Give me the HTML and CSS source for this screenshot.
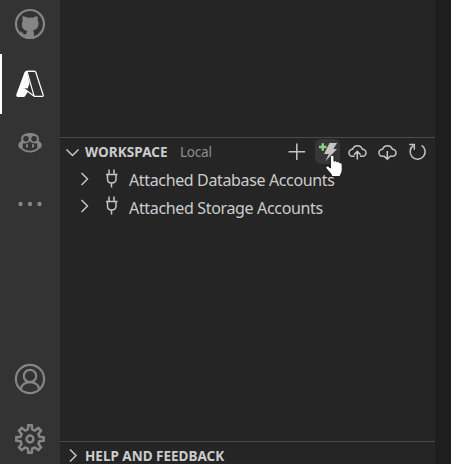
FILE: index.html
```html
<!DOCTYPE html>
<html lang="en">
<head>
<meta charset="utf-8">
<title>Workspace</title>
<link rel="stylesheet" href="styles.css">
</head>
<body>
<div class="workbench">
  <nav class="activity-bar">
    <div class="activity">
      <svg width="60" height="60" viewBox="0 0 60 60">
        <circle cx="30" cy="30" r="14" fill="none" stroke="currentColor" stroke-width="2.2"/>
        <path fill="currentColor" d="M22.6 22.3c.6-.6 3.4.5 5 1.5q2.6-.5 5 0c1.7-1.1 4.2-2 4.7-1.5.7 1.5.6 3 .3 4 1 1.4 1.2 3 .8 5.3-.5 2.8-2.7 4.2-5.500 4.700.8 1 1 2 1 3.600v5H26.300v-2.900c-3 .4-4-.8-4.700-2.200-.5-1-1.400-1.600-1.900-2 .8-.7 2.300 0 3 1.100.9 1.400 2 1.500 3.600 1 .1-1.500.4-2.300 1.200-3-2.800-.5-5-1.900-5.500-4.700-.4-2.500-.1-4 .8-5.500-.5-1.400-.6-3-.2-4.400Z"/>
      </svg>
    </div>
    <div class="activity active">
      <svg width="60" height="60" viewBox="0 0 60 60">
        <path fill="currentColor" d="M26.500 16.700H35.500L27 17.800 29.500 29.500 27.600 34.500 23 34 28 37.500 25 42.200Q24.500 43 23.500 43H17.500Q15.700 42.500 16.300 40.500L24.500 18.200Q25.200 16.700 26.500 16.700Z"/>
        <path fill="none" stroke="currentColor" stroke-width="1.200" stroke-linejoin="round" d="M27 17.300H34.500Q35.500 17.300 35.800 18.300L43.200 41Q43.600 42.300 42.400 42.300H34.200L23.500 34.300M27 17.300L34.200 42.300"/>
      </svg>
    </div>
    <div class="activity">
      <svg width="60" height="60" viewBox="0 0 60 60">
        <path fill="currentColor" d="M30 19c4.500 0 8 1.500 8.700 4.500.3 1.200.2 2.400 0 3.500 1.700.9 3.100 2.100 3.100 4.200 0 1.600-1 2.800-2.500 3.600C37 37.200 33.800 38.500 30 38.500s-7-1.300-9.300-3.700c-1.500-.8-2.500-2-2.500-3.600 0-2.100 1.400-3.300 3.100-4.200-.2-1.100-.3-2.300 0-3.500C22 20.500 25.500 19 30 19Z"/>
        <g fill="#333">
          <circle cx="26" cy="24.700" r="2.800"/><circle cx="34.100" cy="24.700" r="2.800"/>
          <path d="M22.700 29.300c2.700.7 5.500-.1 7.300-2 1.800 1.900 4.600 2.700 7.300 2v5c-4.200 3.200-10.400 3.200-14.600 0Z"/>
        </g>
        <path stroke="currentColor" stroke-width="2" stroke-linecap="round" d="M27 31v1.800m6-1.800v1.800"/>
      </svg>
    </div>
    <div class="activity">
      <svg width="60" height="60" viewBox="0 0 60 60" fill="currentColor"><circle cx="20.500" cy="30" r="2.200"/><circle cx="30" cy="30" r="2.200"/><circle cx="39.500" cy="30" r="2.200"/></svg>
    </div>
    <div class="spacer"></div>
    <div class="activity">
      <svg width="60" height="60" viewBox="0 0 60 60" fill="none" stroke="currentColor" stroke-width="2.200"><circle cx="30" cy="30" r="14.100"/><circle cx="30" cy="27" r="6.200"/><path d="M21 41v-1c0-4 4-6.800 9-6.800s9 2.800 9 6.800v1"/></svg>
    </div>
    <div class="activity">
      <svg width="60" height="60" viewBox="0 0 60 60" fill="none" stroke="currentColor" stroke-width="2.500">
        <path d="M27.800 20.500L28.300 16.300H31.700L32.200 20.500 34.800 21.600 38.300 19 41 21.700 38.400 25.200 39.500 27.800 43.700 28.300V31.700L39.500 32.200 38.400 34.800 41 38.300 38.300 41 34.800 38.400 32.200 39.500 31.700 43.700H28.300L27.800 39.500 25.200 38.400 21.700 41 19 38.300 21.600 34.800 20.500 32.200 16.300 31.700V28.300L20.500 27.800 21.600 25.200 19 21.700 21.700 19 25.200 21.600Z"/><circle cx="30" cy="30" r="3.400"/>
      </svg>
    </div>
  </nav>
  <main class="sidebar">
    <section class="workspace">
      <header class="section-header">
        <svg class="twisty" width="25" height="28" viewBox="0 0 25 28"><path d="M6.500 11.500L12.500 17.500 18.500 11.500"/></svg>
        <h2 class="title title-workspace">WORKSPACE</h2>
        <span class="description">Local</span>
        <div class="actions">
          <button class="action" aria-label="Add"><svg width="26" height="26" viewBox="0 0 26 26"><path d="M12.800 4.500V21M4.600 12.700H21.100"/></svg></button>
          <button class="action hovered" aria-label="Create function">
            <svg width="26" height="26" viewBox="0 0 26 26"><path class="bolt" d="M14.500 4H22L18.300 10H22L10.500 22 13.800 15H9Z"/><path class="plus" d="M7.800 4.300V11.800M4 8H11.500"/></svg>
            <svg class="cursor" width="20" height="26" viewBox="0 0 20 26"><path d="M6.400 15V4.300C6.400 1.500 10 1.500 10 4.300V8.300C11 7.300 12.500 7.700 12.800 8.900 14 8.200 15.300 8.700 15.600 9.900 17.200 9.400 18.200 10.400 18.200 12V17C18.200 20 16.500 21 16 23.600H8C7.500 20.500 4.500 18.500 2 15.200 1.300 13.800 3 12.300 4.400 13.300Z"/></svg>
          </button>
          <button class="action" aria-label="Deploy"><svg width="26" height="26" viewBox="0 0 26 26"><path d="M10.500 17.300H8.300a3.500 3.500 0 1 1 .3-7 5.200 5.200 0 0 1 9.800 0 3.500 3.500 0 1 1 .2 7H15.900M13.300 20.500V12.800M10 15.700L13.300 12.400 16.600 15.700"/></svg></button>
          <button class="action" aria-label="Download"><svg width="26" height="26" viewBox="0 0 26 26"><path d="M10.500 17.300H8.300a3.500 3.500 0 1 1 .3-7 5.200 5.200 0 0 1 9.800 0 3.500 3.500 0 1 1 .2 7H15.900M13.300 12V20M10 17L13.300 20.300 16.600 17"/></svg></button>
          <button class="action" aria-label="Refresh"><svg width="26" height="26" viewBox="0 0 26 26"><path d="M17.600 6.300A7.500 7.500 0 1 1 9.100 6.700M5.300 5.500H10.300V10.700"/></svg></button>
        </div>
      </header>
      <ul class="tree">
        <li class="row">
          <svg class="chevron" width="20" height="28" viewBox="0 0 20 28"><path d="M6.500 7L12.500 13 6.500 19"/></svg>
          <svg class="plug" width="20" height="28" viewBox="0 0 20 28"><path d="M8 3.500V8.500M13 3.500V8.500M5 8.500H16.500M6.500 8.500V13Q6.500 17 10.500 17 15 17 15 13V8.500M10.500 17V21.500"/></svg>
          <span class="label label-database">Attached Database Accounts</span>
        </li>
        <li class="row">
          <svg class="chevron" width="20" height="28" viewBox="0 0 20 28"><path d="M6.500 6L12.500 12 6.500 18"/></svg>
          <svg class="plug" width="20" height="28" viewBox="0 0 20 28"><path d="M8 2.500V7.500M13 2.500V7.500M5 7.500H16.500M6.500 7.500V12Q6.500 16 10.500 16 15 16 15 12V7.500M10.500 16V20.500"/></svg>
          <span class="label label-storage">Attached Storage Accounts</span>
        </li>
      </ul>
    </section>
    <section class="help">
      <header class="section-header">
        <svg class="twisty" width="25" height="28" viewBox="0 0 25 28"><path d="M10 7.500L16 13.500 10 19.500"/></svg>
        <h2 class="title title-help">HELP AND FEEDBACK</h2>
      </header>
    </section>
  </main>
</div>
</body>
</html>
```
FILE: styles.css
```css
* { box-sizing: border-box; }
body { margin: 0; background: #1e1e1e; color: #ccc; font-family: "Noto Sans", "Open Sans", sans-serif; overflow: hidden; }
.workbench { display: flex; height: 464px; overflow: hidden; }
.activity-bar { display: flex; flex-direction: column; width: 60px; height: 475px; margin-top: -6px; flex: none; background: #333; color: #858585; }
.activity { height: 60px; flex: none; }
.activity svg { display: block; }
.active { color: #fff; box-shadow: inset 2px 0 #fff; }
.spacer { flex: 1; }
.sidebar { display: flex; flex-direction: column; width: 375px; background: #252526; padding-top: 137px; }
.workspace { height: 304px; flex: none; }
.section-header { display: flex; align-items: center; height: 29px; border-top: 1px solid #4a4a4a; }
svg { display: block; flex: none; }
.twisty, .chevron, .plug, .action svg { fill: none; stroke: #c5c5c5; stroke-width: 1.5; }
.title { margin: 0; font-size: 13.5px; line-height: 20px; font-weight: 700; white-space: nowrap; }
.title-workspace { width: 83px; letter-spacing: 0.1px; }
.title-help { letter-spacing: 0; }
.description { margin-left: 12px; font-size: 13.5px; line-height: 20px; color: #8f8f8f; letter-spacing: -0.2px; }
.actions { display: flex; gap: 5px; margin: 0 5px 1px auto; }
.action { width: 25px; height: 25px; padding: 0; border: 0; border-radius: 6px; background: none; position: relative; }
.action > svg { margin-left: -1px; }
.action.hovered > svg { margin-left: 0; }
.hovered { background: #363737; }
.action .bolt { fill: #c5c5c5; stroke: none; }
.action .plus { stroke: #89d185; stroke-width: 2.4; }
.action .cursor { position: absolute; left: 9px; top: 14px; z-index: 2; fill: #fff; stroke: #181824; stroke-width: 1; }
.tree { list-style: none; margin: 0; padding: 0; }
.row { display: flex; align-items: center; height: 28px; padding-left: 15px; }
.plug { margin-left: 6px; }
.label { margin: -1px 0 0 8px; font-size: 16px; line-height: 26px; white-space: nowrap; }
.label-database { letter-spacing: -0.36px; }
.label-storage { letter-spacing: -0.34px; }
```
